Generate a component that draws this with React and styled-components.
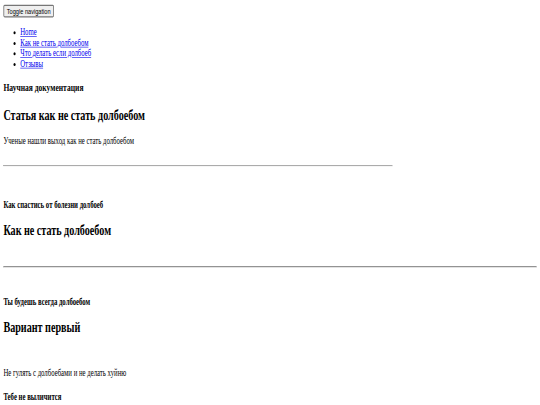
import React from "react";
import styled, { createGlobalStyle } from "styled-components";

const GlobalStyle = createGlobalStyle`
  html, body {
    margin: 0;
    padding: 0;
    background: #ffffff;
    overflow: hidden;
  }
`;

/* The page was captured at 1280x675 and shown squeezed into 540x405 */
const Page = styled.div`
  width: 1280px;
  box-sizing: border-box;
  padding: 8px;
  transform: scale(0.421875, 0.6);
  transform-origin: 0 0;
  font-family: "Liberation Serif", "Times New Roman", serif;
  font-size: 16px;
  line-height: 1.15;
  color: #000;
`;

const NavHeader = styled.div``;

const ToggleButton = styled.button`
  font-family: "Liberation Sans", Arial, sans-serif;
  font-size: 13.333px;
  padding: 1px 6px;
  background: #efefef;
  border: 2px solid #767676;
  border-radius: 3px;
  color: #000;
  line-height: normal;
`;

const NavList = styled.ul`
  margin: 16px 0;
  padding-left: 40px;
  list-style: disc;
  line-height: 17.6px;
`;

const NavItem = styled.li``;

const NavLink = styled.a`
  color: #0000ee;
  text-decoration: underline;
`;

const Section = styled.section`
  padding-top: ${(p) => p.$pad || 0}px;
`;

const Kicker = styled.h5`
  font-size: 16px;
  line-height: 17.8px;
  font-weight: bold;
  margin: 22px 0 21px;
`;

const Label = styled.h4`
  font-size: ${(p) => p.$size || "16px"};
  font-weight: bold;
  margin: ${(p) => p.$top || 21}px 0 ${(p) => p.$bottom || 21}px;
`;

const Title = styled.h2`
  font-size: 24px;
  font-weight: bold;
  margin: 20px 0;
`;

const Text = styled.p`
  margin: ${(p) => p.$top || 16}px 0 16px;
`;

const Divider = styled.hr`
  width: ${(p) => p.$width || "auto"};
  margin: ${(p) => p.$top}px 0 8px;
  border: 1px inset #d0d0d0;
  border-top-color: #a0a0a0;
  height: 0;
`;

export default function App() {
  return (
    <>
      <GlobalStyle />
      <Page>
        <NavHeader>
          <ToggleButton type="button">Toggle navigation</ToggleButton>
        </NavHeader>
        <NavList>
          <NavItem><NavLink href="#">Home</NavLink></NavItem>
          <NavItem><NavLink href="#">Как не стать долбоебом</NavLink></NavItem>
          <NavItem><NavLink href="#">Что делать если долбоеб</NavLink></NavItem>
          <NavItem><NavLink href="#">Отзывы</NavLink></NavItem>
        </NavList>

        <Section>
          <Label $size="17.9px" $top={20.7} $bottom={22}>Научная документация</Label>
          <Title>Статья как не стать долбоебом</Title>
          <Text>Ученые нашли выход как не стать долбоебом</Text>
          <Divider $width="920px" $top={30} />
        </Section>

        <Section $pad={26}>
          <Kicker>Как спастись от болезни долбоеб</Kicker>
          <Title>Как не стать долбоебом</Title>
          <Divider $top={45} />
        </Section>

        <Section $pad={17.5}>
          <Kicker>Ты будешь всегда долбоебом</Kicker>
          <Title>Вариант первый</Title>
          <Text $top={53}>Не гулять с долбоебами и не делать хуйню</Text>
          <Label>Тебе не выличится</Label>
        </Section>
      </Page>
    </>
  );
}
